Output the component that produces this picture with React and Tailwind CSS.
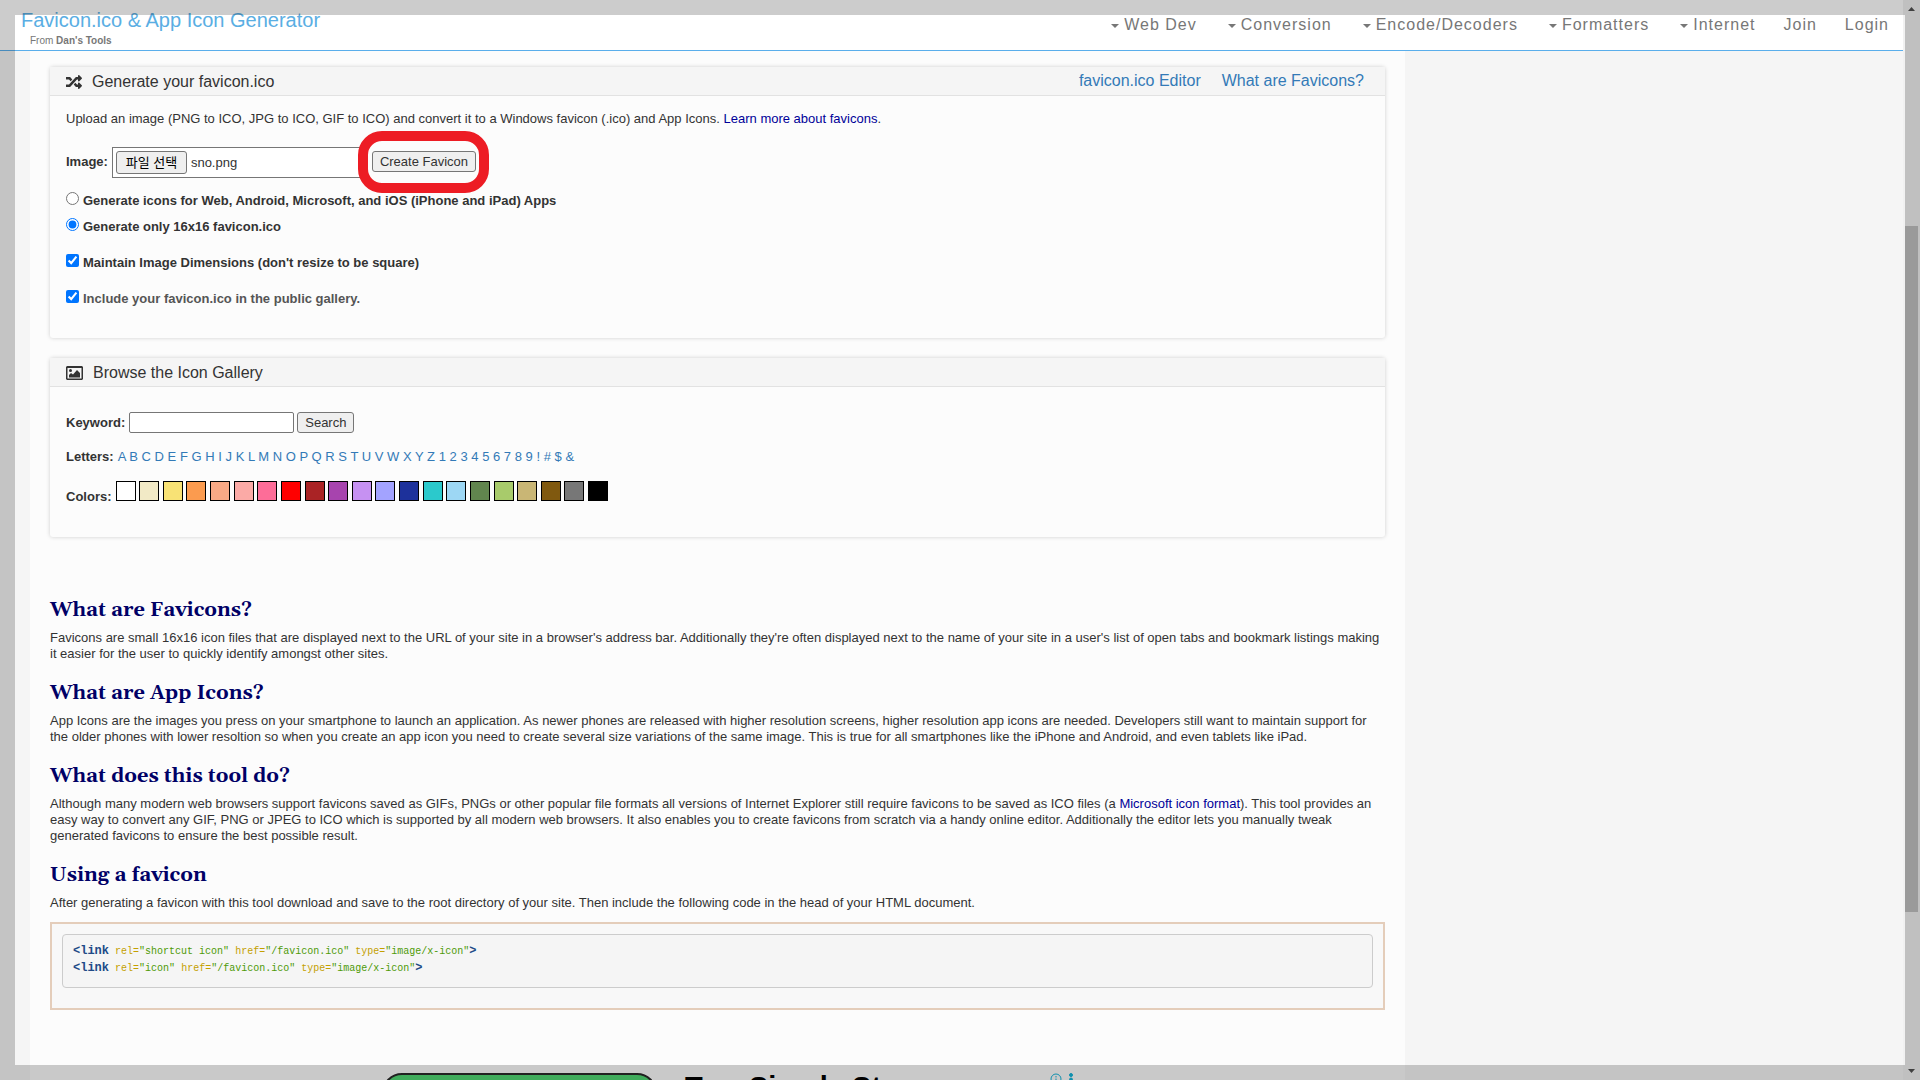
import { FaRandom } from "react-icons/fa";

const menus = ["Web Dev", "Conversion", "Encode/Decoders", "Formatters", "Internet"];
const letters = "ABCDEFGHIJKLMNOPQRSTUVWXYZ123456789!#$&".split("");
const colors = [
  ["White", "bg-[#ffffff]"], ["Cream", "bg-[#f2eac6]"], ["Yellow", "bg-[#f8e275]"], ["Orange", "bg-[#fb9b4f]"],
  ["Peach", "bg-[#f9a985]"], ["Salmon", "bg-[#fbaaa6]"], ["Pink", "bg-[#fd6d98]"], ["Red", "bg-[#ff0000]"],
  ["Dark red", "bg-[#aa2325]"], ["Purple", "bg-[#a744ae]"], ["Violet", "bg-[#c691f2]"], ["Lavender", "bg-[#a3a3ff]"],
  ["Navy", "bg-[#1d319b]"], ["Teal", "bg-[#2bc9cc]"], ["Sky", "bg-[#9dd7f4]"], ["Green", "bg-[#61854e]"],
  ["Lime", "bg-[#a8cb6b]"], ["Tan", "bg-[#c9b675]"], ["Brown", "bg-[#80590f]"], ["Gray", "bg-[#777777]"], ["Black", "bg-[#000000]"],
];

function Header() {
  return (
    <header className="flex h-[51px] shrink-0 justify-between border-b border-[#5aaeeb] bg-white">
      <div className="pl-[21px] pt-2">
        <a href="#" className="block text-xl leading-6 text-[#5aaee3]">Favicon.ico &amp; App Icon Generator</a>
        <p className="pl-[9px] pt-[3px] text-[10px] leading-3 text-[#777]">
          From <a href="#" className="font-bold">Dan&apos;s Tools</a>
        </p>
      </div>
      <nav className="flex items-start gap-7 pr-[14px] pt-[15px] text-base leading-5 tracking-[1px] text-[#777]">
        <div className="flex gap-[31px]">
          {menus.map((m) => (
            <a key={m} href="#" className="flex items-center gap-[5px]">
              <svg width="8" height="4" viewBox="0 0 8 4" className="mt-0.5" fill="currentColor"><path d="M0 0h8L4 4z" /></svg>
              {m}
            </a>
          ))}
        </div>
        <a href="#">Join</a>
        <a href="#">Login</a>
      </nav>
    </header>
  );
}

function Panel({ icon, title, links, children, className }) {
  return (
    <section className={`rounded-[3px] bg-[#fcfcfc] shadow-[0_0_4px_rgba(0,0,0,0.18)] ${className}`}>
      <div className="flex h-[29px] items-center justify-between border-b border-[#e2e2e2] bg-[#f5f5f5] pl-4 pr-[21px] text-base">
        <h2 className="flex items-center gap-[10px] pt-0.5">{icon}{title}</h2>
        {links}
      </div>
      <div className="px-4">{children}</div>
    </section>
  );
}

function Article({ title, children }) {
  return (
    <section>
      <h2 className="mb-1.5 font-['Gelasio','Georgia','DejaVu_Serif','Liberation_Serif',serif] text-xl font-bold leading-7 text-[#000066]">{title}</h2>
      <p className="leading-4">{children}</p>
    </section>
  );
}

function Attr({ name, value }) {
  return <><span className="text-[#c4a000]"> {name}=</span><span className="text-[#4e9a06]">&quot;{value}&quot;</span></>;
}

function Tag({ rel }) {
  return (
    <div>
      <span className="text-xs font-bold leading-4 text-[#204a87]">&lt;link</span>
      <Attr name="rel" value={rel} /><Attr name="href" value="/favicon.ico" /><Attr name="type" value="image/x-icon" />
      <span className="text-xs font-bold leading-4 text-[#204a87]">&gt;</span>
    </div>
  );
}

function Choice({ className, children, ...props }) {
  return (
    <label className={`flex gap-1 leading-6 ${className}`}>
      <input {...props} className="mt-[3px] size-[13px]" />
      {children}
    </label>
  );
}

function Scrollbar() {
  return (
    <div className="flex w-[17px] shrink-0 flex-col items-center bg-[#f1f1f1]" aria-hidden="true">
      <svg width="17" height="17" viewBox="0 0 17 17" fill="#505050"><path d="M5 11h7L8.500 7z" /></svg>
      <div className="grow-[209]" />
      <div className="w-[13px] grow-[686] bg-[#c1c1c1]" />
      <div className="grow-[151]" />
      <svg width="17" height="17" viewBox="0 0 17 17" fill="#505050"><path d="M5 6h7L8.500 10z" /></svg>
    </div>
  );
}

const button = "rounded-[3px] border border-[#767676] bg-[#efefef] px-[7px] text-[13px] leading-[19px]";

export default function App() {
  return (
    <div className="relative flex h-screen overflow-hidden bg-[#f5f5f5] font-['Liberation_Sans','Noto_Sans_CJK_KR',sans-serif] text-[13px] text-[#333]">
      <div className="flex min-w-0 grow flex-col">
        <Header />
        <main className="ml-[30px] mr-[498px] grow bg-[#fcfcfc] px-5 pt-4">
          <Panel
            className="h-[271px]"
            icon={<FaRandom size={16} />}
            title="Generate your favicon.ico"
            links={
              <div className="flex gap-[21px] text-[#337ab7]">
                <a href="#">favicon.ico Editor</a>
                <a href="#">What are Favicons?</a>
              </div>
            }
          >
            <p className="pt-[15px] leading-4">
              Upload an image (PNG to ICO, JPG to ICO, GIF to ICO) and convert it to a Windows favicon (.ico) and App Icons.{" "}
              <a href="#" className="text-[#000099]">Learn more about favicons</a>.
            </p>
            <div className="flex items-start pt-5">
              <label htmlFor="image" className="pr-1 font-bold leading-[30px]">Image:</label>
              <div className="flex h-[31px] w-[255px] items-center gap-1 border border-[#767676] bg-white px-[3px]">
                <button id="image" className="h-[23px] w-[71px] rounded-[3px] border border-[#767676] bg-[#efefef] text-black">파일 선택</button>
                <span>sno.png</span>
              </div>
              <div className="relative ml-[5px] mt-1">
                <button className={`block ${button}`}>Create Favicon</button>
                <div className="pointer-events-none absolute -bottom-[21px] -left-[14px] -right-[13px] -top-5 rounded-[24px] border-[10px] border-[#ed1c24]" />
              </div>
            </div>
            <div className="flex flex-col pt-[11px] font-bold">
              <Choice type="radio" name="kind" className="h-[26px]">Generate icons for Web, Android, Microsoft, and iOS (iPhone and iPad) Apps</Choice>
              <Choice type="radio" name="kind" defaultChecked className="h-9">Generate only 16x16 favicon.ico</Choice>
              <Choice type="checkbox" defaultChecked className="h-9">Maintain Image Dimensions (don&apos;t resize to be square)</Choice>
              <Choice type="checkbox" defaultChecked className="h-9 text-[#555]">Include your favicon.ico in the public gallery.</Choice>
            </div>
          </Panel>

          <Panel
            className="mt-5 h-[179px]"
            icon={
              <svg width="17" height="14" viewBox="0 0 17 14" fill="currentColor">
                <path fillRule="evenodd" d="M1 0h15l1 1v12l-1 1H1l-1-1V1zM1.500 2v10.500h14V2z" />
                <circle cx="4.500" cy="4.500" r="1.500" /><path d="M3 11.500V9l2-2 2 1.500L11 4l3 3v4.500z" />
              </svg>
            }
            title="Browse the Icon Gallery"
          >
            <div className="flex items-center pt-[25px]">
              <label htmlFor="keyword" className="pr-1 font-bold">Keyword:</label>
              <input id="keyword" className="mr-[3px] h-[21px] w-[165px] rounded-[2px] border border-[#767676] bg-white px-1" />
              <button className={button}>Search</button>
            </div>
            <div className="flex pt-4 leading-4">
              <span className="pr-1 font-bold">Letters:</span>
              <div>{letters.map((l) => <span key={l}><a href="#" className="text-[#337ab7]">{l}</a> </span>)}</div>
            </div>
            <div className="flex items-end pt-4">
              <span className="pr-1 font-bold leading-4">Colors:</span>
              <div className="pb-1 leading-5">
                {colors.map(([n, c]) => (
                  <span key={n}><button aria-label={n} className={`inline-block h-5 w-5 border border-black align-top ${c}`} /> </span>
                ))}
              </div>
            </div>
          </Panel>

          <div className="flex flex-col gap-[17px] pt-[59px]">
            <Article title="What are Favicons?">
              Favicons are small 16x16 icon files that are displayed next to the URL of your site in a browser&apos;s address bar. Additionally they&apos;re often displayed next to the name of your site in a user&apos;s list of open tabs and bookmark listings making it easier for the user to quickly identify amongst other sites.
            </Article>
            <Article title="What are App Icons?">
              App Icons are the images you press on your smartphone to launch an application. As newer phones are released with higher resolution screens, higher resolution app icons are needed. Developers still want to maintain support for the older phones with lower resoltion so when you create an app icon you need to create several size variations of the same image. This is true for all smartphones like the iPhone and Android, and even tablets like iPad.
            </Article>
            <Article title="What does this tool do?">
              Although many modern web browsers support favicons saved as GIFs, PNGs or other popular file formats all versions of Internet Explorer still require favicons to be saved as ICO files (a <a href="#" className="text-[#000099]">Microsoft icon format</a>). This tool provides an easy way to convert any GIF, PNG or JPEG to ICO which is supported by all modern web browsers. It also enables you to create favicons from scratch via a handy online editor. Additionally the editor lets you manually tweak generated favicons to ensure the best possible result.
            </Article>
            <Article title="Using a favicon">
              After generating a favicon with this tool download and save to the root directory of your site. Then include the following code in the head of your HTML document.
            </Article>
          </div>
          <div className="mt-[11px] h-[88px] border-2 border-[#e4cdba] bg-[#f8f8f8] p-[10px]">
            <pre className="h-[54px] rounded-[4px] border border-[#ccc] bg-[#f5f5f5] px-[10px] py-2 font-['Liberation_Mono',monospace] text-[10px] leading-[17px]">
              <Tag rel="shortcut icon" />
              <Tag rel="icon" />
            </pre>
          </div>
          <div className="flex items-start pl-[332px] pt-[63px]">
            <div className="h-14 w-[275px] shrink-0 rounded-[20px] border-2 border-[#2a2a2a] bg-[#50d773]" />
            <p className="pl-7 text-[29px] font-bold leading-7 text-black">Two Simple Steps</p>
            <svg width="28" height="14" viewBox="0 0 28 14" className="ml-[118px]" fill="none" stroke="#14b4da" strokeWidth="1">
              <circle cx="7" cy="6" r="5" />
              <path d="M7 5.500v4M7 3v1.500" />
              <circle cx="22" cy="2" r="1.500" fill="#14b4da" />
              <circle cx="22" cy="6.500" r="1.500" fill="#14b4da" />
            </svg>
          </div>
        </main>
      </div>
      <Scrollbar />
      <div className="pointer-events-none absolute inset-0 border-[15px] border-black/20" />
    </div>
  );
}
